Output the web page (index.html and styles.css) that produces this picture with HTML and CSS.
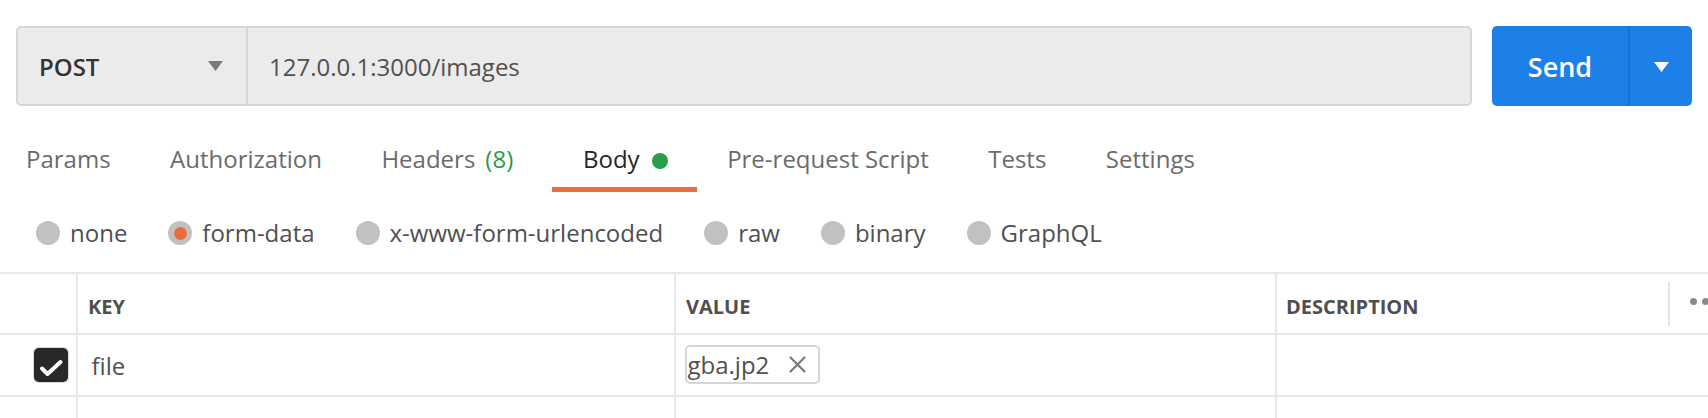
FILE: index.html
```html
<!DOCTYPE html>
<html lang="en">
<head>
<meta charset="utf-8">
<title>Request builder</title>
<link rel="stylesheet" href="styles.css">
</head>
<body>
<div class="page">
  <div class="request-bar">
    <div class="url-group">
      <div class="method">
        <span class="method-name">POST</span>
        <svg class="caret" width="15" height="10" viewBox="0 0 15 10"><path d="M0 0 H15 L7.5 10 Z" fill="#7b7b7b"/></svg>
      </div>
      <div class="url">127.0.0.1:3000/images</div>
    </div>
    <div class="send-group">
      <button class="send">Send</button>
      <button class="send-more" aria-label="More send options">
        <svg width="15" height="10" viewBox="0 0 15 10"><path d="M0 0 H15 L7.5 10 Z" fill="#ffffff"/></svg>
      </button>
    </div>
  </div>

  <nav class="tabs">
    <span class="tab tab-first">Params</span>
    <span class="tab">Authorization</span>
    <span class="tab tab-headers">Headers<span class="count">(8)</span></span>
    <span class="tab tab-active">Body<span class="dot"></span></span>
    <span class="tab">Pre-request Script</span>
    <span class="tab">Tests</span>
    <span class="tab">Settings</span>
  </nav>

  <div class="body-types">
    <label class="radio"><span class="radio-circle"></span><span>none</span></label>
    <label class="radio"><span class="radio-circle radio-on"></span><span>form-data</span></label>
    <label class="radio"><span class="radio-circle"></span><span>x-www-form-urlencoded</span></label>
    <label class="radio"><span class="radio-circle"></span><span>raw</span></label>
    <label class="radio"><span class="radio-circle"></span><span>binary</span></label>
    <label class="radio"><span class="radio-circle"></span><span>GraphQL</span></label>
  </div>

  <div class="kv-table">
    <div class="cell th"></div>
    <div class="cell th"><span class="th-label">KEY</span></div>
    <div class="cell th"><span class="th-label">VALUE</span></div>
    <div class="cell th th-last">
      <span class="th-label th-desc">DESCRIPTION</span>
      <span class="th-divider"></span>
      <span class="more-dots"><i></i><i></i><i></i></span>
    </div>

    <div class="cell td td-check">
      <span class="checkbox">
        <svg width="34" height="34" viewBox="0 0 34 34"><path d="M8 20.5 L13.5 26 L26.5 14" fill="none" stroke="#ffffff" stroke-width="4" stroke-linecap="round" stroke-linejoin="round"/></svg>
      </span>
    </div>
    <div class="cell td td-text">file</div>
    <div class="cell td td-value">
      <span class="file-chip">gba.jp2
        <svg class="chip-x" width="17" height="17" viewBox="0 0 17 17"><path d="M1.5 1.5 L15.5 15.5 M15.5 1.5 L1.5 15.5" stroke="#7a7a7a" stroke-width="2.2" stroke-linecap="round"/></svg>
      </span>
    </div>
    <div class="cell td td-last"></div>

    <div class="cell td"></div>
    <div class="cell td"></div>
    <div class="cell td"></div>
    <div class="cell td td-last"></div>
  </div>
</div>
</body>
</html>
```

FILE: styles.css
```css
* { box-sizing: border-box; }

html, body {
  margin: 0;
  padding: 0;
  background: #ffffff;
}

body {
  width: 1708px;
  height: 418px;
  overflow: hidden;
  font-family: "Open Sans", "Noto Sans", "Liberation Sans", sans-serif;
  font-size: 24px;
  color: #505050;
}

.page {
  width: 1708px;
}

/* ---------- request bar ---------- */
.request-bar {
  display: flex;
  gap: 20px;
  padding: 26px 16px 0 16px;
}

.url-group {
  flex: 1;
  display: flex;
  height: 80px;
  background: #ebebeb;
  border: 2px solid #d6d6d6;
  border-radius: 5px;
}

.method {
  width: 230px;
  display: flex;
  align-items: center;
  justify-content: space-between;
  padding: 0 23px 0 21px;
  border-right: 2px solid #d6d6d6;
}

.method-name {
  font-weight: 600;
  color: #333333;
}

.url {
  display: flex;
  align-items: center;
  padding-left: 21px;
  color: #505050;
}

.send-group {
  display: flex;
  width: 200px;
  height: 80px;
  border-radius: 5px;
  overflow: hidden;
  background: #1d80e9;
}

.send, .send-more {
  border: 0;
  margin: 0;
  background: transparent;
  color: #ffffff;
  font-family: inherit;
  display: flex;
  align-items: center;
  justify-content: center;
}

.send {
  width: 138px;
  font-size: 27px;
  font-weight: 600;
  padding: 1px 0 0 0;
  border-right: 2px solid #1a70cf;
}

.send-more {
  flex: 1;
  padding: 2px 0 0 0;
}

/* ---------- tabs ---------- */
.tabs {
  display: flex;
  margin-top: 24px;
  white-space: nowrap;
}

.tab {
  height: 62px;
  padding: 13px 29.75px 0;
  line-height: 32px;
  color: #6b6b6b;
  border-bottom: 5px solid transparent;
  display: flex;
  align-items: flex-start;
}

.tab-first { padding-left: 26px; }

.count {
  color: #2a9c48;
  margin-left: 10px;
}

.tab-active {
  margin-left: 9px;
  padding-left: 31px;
  color: #262626;
  border-bottom-color: #f26b3a;
}

.dot {
  width: 16px;
  height: 16px;
  border-radius: 50%;
  background: #2a9d4b;
  margin: 10px 0 0 12px;
}

/* ---------- body type radios ---------- */
.body-types {
  display: flex;
  align-items: center;
  height: 80px;
  padding: 2px 0 0 36px;
}

.radio {
  display: flex;
  align-items: center;
  gap: 10px;
  margin-right: 41px;
  line-height: 32px;
  color: #505050;
  white-space: nowrap;
}

.radio-circle {
  width: 24px;
  height: 24px;
  border-radius: 50%;
  background: #c1c1c1;
  display: flex;
  align-items: center;
  justify-content: center;
}

.radio-on::after {
  content: "";
  width: 13px;
  height: 13px;
  border-radius: 50%;
  background: #ef6b3e;
}

/* ---------- key / value table ---------- */
.kv-table {
  display: grid;
  grid-template-columns: 78px 598px 601px 1fr;
  border-top: 2px solid #e8e8e8;
}

.cell {
  border-right: 2px solid #e8e8e8;
  border-bottom: 2px solid #e8e8e8;
  display: flex;
  align-items: center;
  overflow: hidden;
  white-space: nowrap;
}

.th {
  height: 61px;
  padding-left: 10px;
}

.th-label {
  font-size: 20px;
  font-weight: 700;
  color: #4f4f4f;
  padding-top: 6px;
}

.th-last, .td-last {
  border-right: 0;
}

.th-last { padding-left: 9px; }

.th-desc {
  flex: 0 0 382px;
}

.th-divider {
  flex: 0 0 2px;
  height: 44px;
  background: #e6e6e6;
}

.more-dots {
  display: flex;
  gap: 4.7px;
  margin: 0 0 4px 20px;
}

.more-dots i {
  width: 7px;
  height: 7px;
  border-radius: 50%;
  background: #8a8a8a;
}

.td {
  height: 62px;
}

.td-check {
  justify-content: flex-end;
  padding-right: 8px;
}

.checkbox {
  width: 34px;
  height: 34px;
  border-radius: 5px;
  background: #282828;
  box-shadow: 0 0 0 1px #d9d9d9;
  display: flex;
}

.td-text {
  padding-left: 13.5px;
  color: #505050;
}

.td-value {
  padding-left: 8.5px;
}

.file-chip {
  display: inline-flex;
  align-items: center;
  height: 39px;
  padding: 0 12px 0 1px;
  border: 2px solid #d6d6d6;
  border-radius: 5px;
  color: #505050;
  margin-top: -2px;
}

.chip-x {
  margin-left: 20px;
}
```
